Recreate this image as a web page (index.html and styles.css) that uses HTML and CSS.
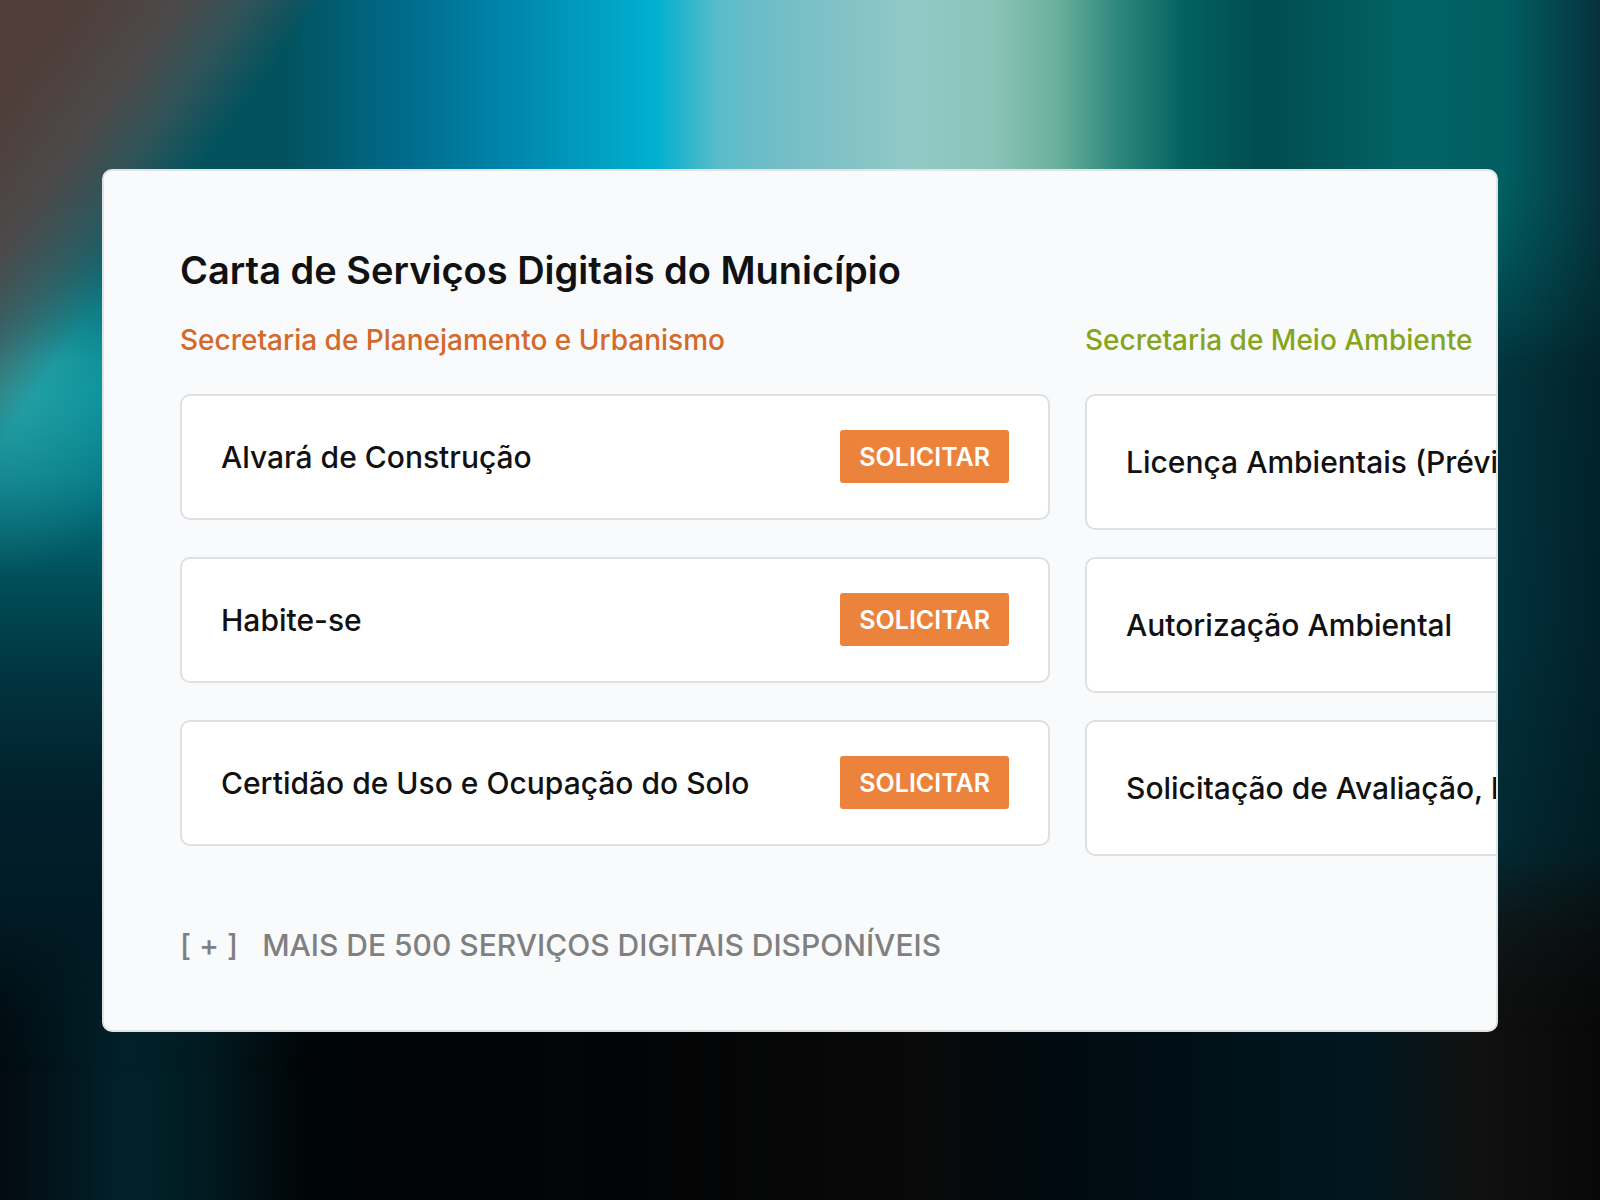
FILE: index.html
```html
<!DOCTYPE html>
<html lang="pt-BR">
<head>
    <meta charset="UTF-8">
    <meta name="viewport" content="width=device-width, initial-scale=1.0">
    <title>Carta de Serviços Digitais do Município</title>
    <link rel="stylesheet" href="styles.css">
</head>
<body>
    <div class="backdrop">
        <div class="glow glow-left"></div>
        <div class="glow glow-right"></div>
        <div class="glow glow-top"></div>
        <div class="glow glow-corner"></div>
    </div>

    <main class="panel">
        <h1 class="title">Carta de Serviços Digitais do Município</h1>

        <div class="columns">
            <section class="column planning">
                <h2 class="department">Secretaria de Planejamento e Urbanismo</h2>
                <ul class="services">
                    <li class="service">
                        <span>Alvará de Construção</span>
                        <button class="request-btn" type="button">SOLICITAR</button>
                    </li>
                    <li class="service">
                        <span>Habite-se</span>
                        <button class="request-btn" type="button">SOLICITAR</button>
                    </li>
                    <li class="service">
                        <span>Certidão de Uso e Ocupação do Solo</span>
                        <button class="request-btn" type="button">SOLICITAR</button>
                    </li>
                </ul>
            </section>

            <section class="column environment">
                <h2 class="department">Secretaria de Meio Ambiente</h2>
                <ul class="services">
                    <li class="service"><span>Licença Ambientais (Prévia)</span></li>
                    <li class="service"><span>Autorização Ambiental</span></li>
                    <li class="service"><span>Solicitação de Avaliação, Licença</span></li>
                </ul>
            </section>
        </div>

        <a class="more" href="#"><span>[ + ]</span><span>MAIS DE 500 SERVIÇOS DIGITAIS DISPONÍVEIS</span></a>
    </main>
</body>
</html>
```

FILE: styles.css
```css
* {
    box-sizing: border-box;
}
body {
    font-family: Inter, sans-serif;
    margin: 0;
    min-height: 100vh;
    display: flex;
    align-items: center;
    padding: 0 102px;
    color: #111;
    background: #020608;
    overflow: hidden;
}

/* blurred lights behind the panel */
.backdrop {
    position: absolute;
    inset: 0;
    z-index: -1;
    background: linear-gradient(90deg, #010b10 0%, #01222b 8%, #001a20 13%, #000507 19%, #030405 40%, #090909 58%, #000a10 66%, #001720 85%, #111 92%, #080808 100%);
}
.glow {
    position: absolute;
    inset: 0;
}
.glow-left {
    right: 80%;
    background:
        radial-gradient(ellipse 50% 16% at 0 32%, rgba(80, 185, 180, 0.5), transparent),
        linear-gradient(#1f6f78 16%, #0b8790 24%, #008c98 33%, #007885 40%, #00505a 48%, #013540 56%, #01202c 66%, #011a24 78%, rgba(1, 26, 36, 0) 90%);
    -webkit-mask-image: linear-gradient(#000 76%, transparent 90%);
    mask-image: linear-gradient(#000 76%, transparent 90%);
}
.glow-right {
    left: 80%;
    background:
        linear-gradient(90deg, transparent 68%, rgba(2, 8, 12, 0.4)),
        linear-gradient(#02585c 15%, #03454d 21%, #02343e 32%, #01323e 52%, #022932 70%, #101818 80%, #101818 88%);
    -webkit-mask-image: linear-gradient(#000 72%, transparent 86%);
    mask-image: linear-gradient(#000 72%, transparent 86%);
}
.glow-top {
    background: linear-gradient(90deg, #02525e 8%, #02525e 18%, #006a8a 25%, #0087ae 32%, #00b0cf 41%, #5cbcca 45%, #74bdc6 49%, #92c9c6 57%, #8bc4b9 62%, #6cb19c 66%, #2c867c 70%, #036260 74%, #014c50 79%, #016365 88%, #015e61 94%, #06323d 100%);
    -webkit-mask-image: linear-gradient(#000 15%, transparent 30%);
    mask-image: linear-gradient(#000 15%, transparent 30%);
}
.glow-corner {
    background: linear-gradient(126deg, #4f3d39 60px, #4b4a4a 150px, rgba(68, 84, 86, 0.7) 200px, rgba(40, 90, 94, 0) 260px);
}

.panel {
    width: 100%;
    padding: 75px 0 67px 76px;
    background: #f9fafc;
    border: 2px solid #dfe5e6;
    border-radius: 10px;
    overflow: hidden;
}
.title {
    margin: 0 0 28px;
    font-size: 38px;
    font-weight: 600;
    line-height: 48px;
}
.columns {
    display: flex;
    gap: 35px;
}
.column {
    flex: none;
    width: 870px;
}
.department {
    margin: 0 0 36px;
    font-size: 28px;
    font-weight: 500;
    line-height: 36px;
}
.planning .department {
    color: #d4692a;
}
.environment .department {
    color: #86a51c;
}
.services {
    list-style: none;
    margin: 0;
    padding: 0;
    display: grid;
    grid-auto-rows: 163px;
    align-items: start;
}
.service {
    display: flex;
    align-items: center;
    justify-content: space-between;
    height: 126px;
    padding: 0 39px;
    background: #fff;
    border: 2px solid #dfe0e1;
    border-radius: 10px;
    font-size: 30px;
    font-weight: 500;
    white-space: nowrap;
}
.environment .service {
    height: 136px;
}
.request-btn {
    height: 53px;
    padding: 0 19px;
    border: none;
    border-radius: 3px;
    background: #ec833c;
    color: #fff;
    font: 600 25px Inter, sans-serif;
    cursor: pointer;
}
.more {
    display: inline-flex;
    gap: 24px;
    margin-top: 44px;
    color: #808080;
    font-size: 30px;
    font-weight: 500;
    line-height: 36px;
    text-decoration: none;
}
```
